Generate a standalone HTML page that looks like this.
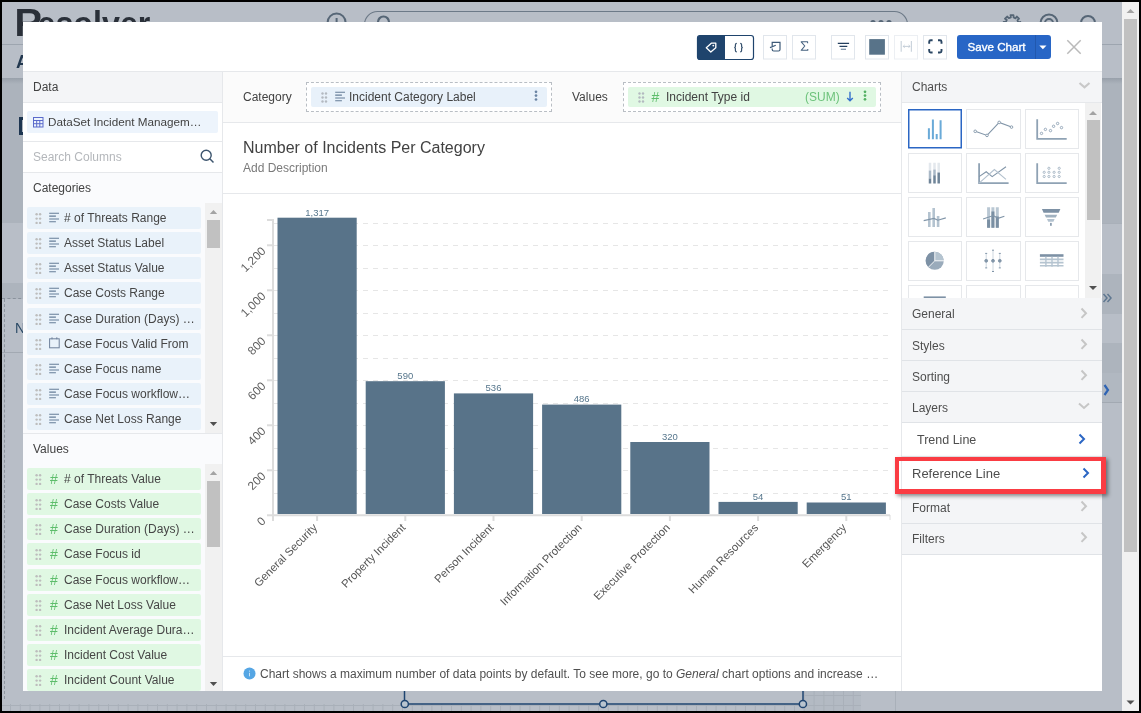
<!DOCTYPE html>
<html><head><meta charset="utf-8">
<style>
*{box-sizing:border-box}
html,body{margin:0;padding:0}
body{width:1141px;height:713px;overflow:hidden;background:#000;position:relative;font-family:"Liberation Sans",sans-serif;color:#3b3f45}
.a{position:absolute}
.t{position:absolute;white-space:nowrap;font-size:12px;line-height:14px}
#bg{left:2px;top:2px;width:1137px;height:709px;background:#b8bec7;overflow:hidden}
#modal{left:23px;top:22px;width:1079px;height:669px;background:#fff;overflow:hidden}
.hl{position:absolute;height:1px;background:#e6e8eb}
.vl{position:absolute;width:1px;background:#e6e8eb}
.item{position:absolute;left:27px;width:174px;height:22px;border-radius:2px}
.cat{background:#e9f2fa}
.val{background:#e0f8e3}
.item .t{left:37px;top:4px;color:#464646}
.sb{position:absolute;background:#f1f1f1}
.sbt{position:absolute;background:#c1c1c1}
.acc{position:absolute;left:902px;width:200px;background:#f4f5f7;border-bottom:1px solid #e6e8eb}
.acc .t{left:10px;color:#4e4e4e}
.tb{position:absolute;top:35px;width:24px;height:24px;border:1px solid #dfe4ea;border-radius:2px;background:#fff}
</style></head><body><div id="wrap" style="position:absolute;left:0;top:0;width:1141px;height:713px;will-change:transform">
<div id="bg" class="a">
 <div class="a" style="left:0;top:0;width:1137px;height:43px;background:#b8bec7;border-bottom:1px solid #9da5af"></div>
 <svg class="a" style="left:0;top:0" width="200" height="42" font-family="Liberation Sans" font-weight="bold" fill="#2a3039"><text x="12.5" y="33.8" font-size="39">R</text><text transform="translate(35.5,33.8) scale(0.934,1)" x="0" y="0" font-size="34.5">esolver</text></svg>
 <svg class="a" style="left:0;top:0" width="1137" height="42">
  <circle cx="334.6" cy="20.5" r="9" fill="none" stroke="#566676" stroke-width="2"/>
  <line x1="334.6" y1="16" x2="334.6" y2="22" stroke="#566676" stroke-width="2"/>
  <rect x="362.5" y="9.5" width="543" height="26" rx="13" fill="none" stroke="#6d7a88" stroke-width="1.2"/>
  <circle cx="381.5" cy="20" r="5.5" fill="none" stroke="#566676" stroke-width="2.2"/>
  <circle cx="871" cy="20.5" r="2.6" fill="#566676"/><circle cx="879" cy="20.5" r="2.6" fill="#566676"/><circle cx="887" cy="20.5" r="2.6" fill="#566676"/>
  <path d="M1008.51 13.13 L1011.49 13.13 L1011.59 15.40 L1013.60 16.33 L1014.86 14.53 L1016.97 16.64 L1015.44 18.31 L1016.20 20.39 L1018.37 20.01 L1018.37 22.99 L1016.10 23.09 L1015.17 25.10 L1016.97 26.36 L1014.86 28.47 L1013.19 26.94 L1011.11 27.70 L1011.49 29.87 L1008.51 29.87 L1008.41 27.60 L1006.40 26.67 L1005.14 28.47 L1003.03 26.36 L1004.56 24.69 L1003.80 22.61 L1001.63 22.99 L1001.63 20.01 L1003.90 19.91 L1004.83 17.90 L1003.03 16.64 L1005.14 14.53 L1006.81 16.06 L1008.89 15.30 Z" fill="none" stroke="#566676" stroke-width="1.8" stroke-linejoin="round"/>
  <circle cx="1047" cy="21" r="8.5" fill="none" stroke="#566676" stroke-width="2"/>
  <circle cx="1047" cy="21" r="4" fill="none" stroke="#566676" stroke-width="2"/>
  <circle cx="1086" cy="21" r="7" fill="none" stroke="#566676" stroke-width="2"/>
 </svg>
 <div class="a" style="left:0;top:76px;width:1137px;height:145px;background:#acb3bc"></div>
 <div class="a" style="left:0;top:76px;width:1137px;height:6px;background:linear-gradient(#98a0aa,#acb3bc)"></div>
 <div class="t" style="left:14px;top:50px;font-size:18px;line-height:20px;color:#22384f;font-weight:bold">A</div>
 <div class="a" style="left:16.5px;top:114.5px;width:8px;height:18px;border:3px solid #1d3550;border-right:none"></div>
 <div class="a" style="left:0;top:281px;width:30px;height:16px;background:#adb4bd;border-bottom:1px dashed #8a929c"></div>
 <div class="a" style="left:0;top:350px;width:30px;height:1px;background:#a2a9b2"></div>
 <div class="t" style="left:13px;top:318px;font-size:14px;line-height:16px;color:#2b4a66">N</div>
 <div class="a" style="left:2px;top:297px;width:1px;height:400px;border-left:1px dashed #8e969f"></div>
 <div class="a" style="left:1090px;top:221px;width:30px;height:1px;background:#a9b0b9"></div>
 <div class="a" style="left:1090px;top:272px;width:30px;height:40px;background:#adb4bd"></div>
 <div class="a" style="left:1090px;top:341px;width:30px;height:30px;background:#adb4bd"></div>
 <div class="a" style="left:1090px;top:371px;width:30px;height:30px;background:#b1b8c1;border-bottom:1px solid #a2a9b2"></div>
 <svg class="a" style="left:1100px;top:280px" width="20" height="120">
  <path d="M1.5 12 L5 16 L1.5 20 M5.5 12 L9 16 L5.5 20" fill="none" stroke="#5f7790" stroke-width="1.5"/>
  <path d="M2.5 103 L6 108 L2.5 113" fill="none" stroke="#2f64b4" stroke-width="2.2"/>
 </svg>
 <svg class="a" style="left:0;top:689px" width="1137" height="22">
  <rect x="801" y="0" width="58" height="22" fill="#b3bac3"/>
  <g stroke="#a9b0b9" stroke-width="1"><line x1="792.5" y1="13" x2="792.5" y2="20"/><line x1="782.7" y1="13" x2="782.7" y2="20"/><line x1="772.9" y1="13" x2="772.9" y2="20"/><line x1="763.1" y1="13" x2="763.1" y2="20"/><line x1="753.3" y1="13" x2="753.3" y2="20"/><line x1="743.5" y1="13" x2="743.5" y2="20"/><line x1="733.7" y1="13" x2="733.7" y2="20"/><line x1="723.9" y1="13" x2="723.9" y2="20"/><line x1="714.1" y1="13" x2="714.1" y2="20"/><line x1="704.3" y1="13" x2="704.3" y2="20"/><line x1="694.5" y1="13" x2="694.5" y2="20"/><line x1="684.7" y1="13" x2="684.7" y2="20"/><line x1="674.9" y1="13" x2="674.9" y2="20"/><line x1="665.1" y1="13" x2="665.1" y2="20"/><line x1="655.3" y1="13" x2="655.3" y2="20"/><line x1="645.5" y1="13" x2="645.5" y2="20"/><line x1="635.7" y1="13" x2="635.7" y2="20"/><line x1="625.9" y1="13" x2="625.9" y2="20"/><line x1="616.1" y1="13" x2="616.1" y2="20"/><line x1="606.3" y1="13" x2="606.3" y2="20"/><line x1="596.5" y1="13" x2="596.5" y2="20"/><line x1="586.7" y1="13" x2="586.7" y2="20"/><line x1="576.9" y1="13" x2="576.9" y2="20"/><line x1="567.1" y1="13" x2="567.1" y2="20"/><line x1="557.3" y1="13" x2="557.3" y2="20"/><line x1="547.5" y1="13" x2="547.5" y2="20"/><line x1="537.7" y1="13" x2="537.7" y2="20"/><line x1="527.9" y1="13" x2="527.9" y2="20"/><line x1="518.1" y1="13" x2="518.1" y2="20"/><line x1="508.3" y1="13" x2="508.3" y2="20"/><line x1="498.5" y1="13" x2="498.5" y2="20"/><line x1="488.7" y1="13" x2="488.7" y2="20"/><line x1="478.9" y1="13" x2="478.9" y2="20"/><line x1="469.1" y1="13" x2="469.1" y2="20"/><line x1="459.3" y1="13" x2="459.3" y2="20"/><line x1="449.5" y1="13" x2="449.5" y2="20"/><line x1="439.7" y1="13" x2="439.7" y2="20"/><line x1="429.9" y1="13" x2="429.9" y2="20"/><line x1="420.1" y1="13" x2="420.1" y2="20"/><line x1="410.3" y1="13" x2="410.3" y2="20"/><line x1="400.5" y1="13" x2="400.5" y2="20"/><line x1="390.7" y1="13" x2="390.7" y2="20"/><line x1="380.9" y1="13" x2="380.9" y2="20"/><line x1="371.1" y1="13" x2="371.1" y2="20"/><line x1="361.3" y1="13" x2="361.3" y2="20"/><line x1="351.5" y1="13" x2="351.5" y2="20"/><line x1="341.7" y1="13" x2="341.7" y2="20"/><line x1="331.9" y1="13" x2="331.9" y2="20"/><line x1="322.1" y1="13" x2="322.1" y2="20"/><line x1="312.3" y1="13" x2="312.3" y2="20"/><line x1="302.5" y1="13" x2="302.5" y2="20"/><line x1="292.7" y1="13" x2="292.7" y2="20"/><line x1="282.9" y1="13" x2="282.9" y2="20"/><line x1="273.1" y1="13" x2="273.1" y2="20"/><line x1="263.3" y1="13" x2="263.3" y2="20"/><line x1="253.5" y1="13" x2="253.5" y2="20"/><line x1="243.7" y1="13" x2="243.7" y2="20"/><line x1="233.9" y1="13" x2="233.9" y2="20"/><line x1="224.1" y1="13" x2="224.1" y2="20"/><line x1="214.3" y1="13" x2="214.3" y2="20"/><line x1="204.5" y1="13" x2="204.5" y2="20"/><line x1="194.7" y1="13" x2="194.7" y2="20"/><line x1="184.9" y1="13" x2="184.9" y2="20"/><line x1="175.1" y1="13" x2="175.1" y2="20"/><line x1="165.3" y1="13" x2="165.3" y2="20"/><line x1="155.5" y1="13" x2="155.5" y2="20"/><line x1="145.7" y1="13" x2="145.7" y2="20"/><line x1="135.9" y1="13" x2="135.9" y2="20"/><line x1="126.1" y1="13" x2="126.1" y2="20"/><line x1="116.3" y1="13" x2="116.3" y2="20"/><line x1="106.5" y1="13" x2="106.5" y2="20"/><line x1="96.7" y1="13" x2="96.7" y2="20"/><line x1="86.9" y1="13" x2="86.9" y2="20"/><line x1="77.1" y1="13" x2="77.1" y2="20"/><line x1="67.3" y1="13" x2="67.3" y2="20"/><line x1="57.5" y1="13" x2="57.5" y2="20"/><line x1="47.7" y1="13" x2="47.7" y2="20"/><line x1="37.9" y1="13" x2="37.9" y2="20"/><line x1="28.1" y1="13" x2="28.1" y2="20"/><line x1="18.3" y1="13" x2="18.3" y2="20"/><line x1="8.5" y1="13" x2="8.5" y2="20"/><line x1="-1.3" y1="13" x2="-1.3" y2="20"/><line x1="802.3" y1="0" x2="802.3" y2="20"/><line x1="812.1" y1="0" x2="812.1" y2="20"/><line x1="821.9" y1="0" x2="821.9" y2="20"/><line x1="831.7" y1="0" x2="831.7" y2="20"/><line x1="841.5" y1="0" x2="841.5" y2="20"/><line x1="851.3" y1="0" x2="851.3" y2="20"/><line x1="0" y1="14.5" x2="859" y2="14.5"/><line x1="801" y1="4.5" x2="859" y2="4.5"/><line x1="893.5" y1="0" x2="893.5" y2="22"/></g>
  <line x1="402.5" y1="0" x2="402.5" y2="13" stroke="#1f4470" stroke-width="1.5"/>
  <line x1="801" y1="0" x2="801" y2="13" stroke="#1f4470" stroke-width="1.5"/>
  <line x1="402.5" y1="13" x2="800.5" y2="13" stroke="#1f4470" stroke-width="1.5"/>
  <circle cx="402.8" cy="13" r="3.6" fill="#b9c4cf" stroke="#1f4470" stroke-width="1.5"/>
  <circle cx="601.3" cy="13" r="3.6" fill="#b9c4cf" stroke="#1f4470" stroke-width="1.5"/>
  <circle cx="800.9" cy="13" r="3.6" fill="#b9c4cf" stroke="#1f4470" stroke-width="1.5"/>
 </svg>
</div>
<div class="a" style="left:1122px;top:2px;width:17px;height:709px;background:#f1f1f1">
 <svg class="a" style="left:0;top:0" width="17" height="709"><path d="M4.5 11 L8.5 7 L12.5 11 Z" fill="#a3a3a3"/><path d="M4.5 698.5 L8.5 702.5 L12.5 698.5 Z" fill="#505050"/></svg>
 <div class="a" style="left:2px;top:17px;width:13px;height:533px;background:#c1c1c1"></div>
</div>
<div id="modal" class="a"></div>
<!-- toolbar -->
<svg class="a" style="left:690px;top:30px" width="270" height="35">
 <g transform="translate(-690,-30)">
 <rect x="697.5" y="35.5" width="56" height="24" rx="2.5" fill="#fff" stroke="#1f446d" stroke-width="1.2"/>
 <path d="M700 35.5 H725 V59.5 H700 A2.5 2.5 0 0 1 697.5 57 V38 A2.5 2.5 0 0 1 700 35.5 Z" fill="#1f446d"/>
 <path d="M706.3 47.7 L711.3 43.2 L715.8 43.2 L715.8 47.7 L710.8 52 Z" fill="none" stroke="#fff" stroke-width="1.3" stroke-linejoin="round"/>
 <circle cx="713.3" cy="45.6" r="0.9" fill="#fff"/>
 <path d="M736.8 43.4 Q735.4 43.4 735.4 44.7 V46.6 Q735.4 47.5 734.2 47.5 Q735.4 47.5 735.4 48.4 V50.5 Q735.4 51.8 736.8 51.8" fill="none" stroke="#35506d" stroke-width="1.2"/>
 <path d="M740.2 43.4 Q741.6 43.4 741.6 44.7 V46.6 Q741.6 47.5 742.8 47.5 Q741.6 47.5 741.6 48.4 V50.5 Q741.6 51.8 740.2 51.8" fill="none" stroke="#35506d" stroke-width="1.2"/>
 <g fill="#fff" stroke="#e1e6ec" stroke-width="1">
  <rect x="763.5" y="35.5" width="23" height="23.5"/>
  <rect x="792.5" y="35.5" width="23" height="23.5"/>
  <rect x="831.5" y="35.5" width="23" height="23.5"/>
  <rect x="865.5" y="35.5" width="23" height="23.5"/>
  <rect x="894.5" y="35.5" width="23" height="23.5" stroke="#eceff3"/>
  <rect x="923.5" y="35.5" width="23" height="23.5"/>
 </g>
 <path d="M772.2 46 V42.4 H780 V49.5 Q780 51 778.5 51 H773.7 Q772.2 51 772.2 49.5 V48.5" fill="none" stroke="#3d5a78" stroke-width="1.2"/>
 <path d="M770 47.6 L775.8 45.3" fill="none" stroke="#3d5a78" stroke-width="1.2"/>
 <path d="M807.6 43.2 V41.8 H801.2 L804.8 46 L801.2 50.3 H807.8 V49" fill="none" stroke="#45617f" stroke-width="1.05" stroke-linejoin="round"/>
 <path d="M837.8 43.4 H849.1 M839.5 46.4 H847.3" stroke="#243f5e" stroke-width="1.3"/>
 <path d="M840.8 49.3 H846" stroke="#7f93a8" stroke-width="1.3"/>
 <rect x="869.2" y="39.1" width="15.7" height="15.6" fill="#587389"/>
 <path d="M901.2 41 V51.7 M911.4 41 V51.7" stroke="#cbd4dd" stroke-width="1.2"/>
 <path d="M903.2 46.4 H910 M904.6 45 L903.2 46.4 L904.6 47.8 M908.6 45 L910 46.4 L908.6 47.8" fill="none" stroke="#bcc7d2" stroke-width="0.9"/>
 <path d="M929.2 43.8 V41.8 Q929.2 40.3 930.7 40.3 H932.6 M938 40.3 H940 Q941.5 40.3 941.5 41.8 V43.8 M941.5 49 V51 Q941.5 52.5 940 52.5 H938 M932.6 52.5 H930.7 Q929.2 52.5 929.2 51 V49" fill="none" stroke="#2a4663" stroke-width="1.9"/>
 </g>
</svg>
<div class="a" style="left:957px;top:35px;width:94px;height:24px;background:#2866c6;border-radius:3px">
 <div class="t" style="left:10.5px;top:5px;color:#fff;font-size:11.6px;-webkit-text-stroke:0.35px #fff">Save Chart</div>
 <div class="a" style="left:78px;top:0;width:1px;height:24px;background:#2158ae"></div>
 <svg class="a" style="left:79px;top:0" width="15" height="24"><path d="M3.3 10.5 H10.5 L6.9 14.2 Z" fill="#fff"/></svg>
</div>
<svg class="a" style="left:1066px;top:39px" width="16" height="16"><path d="M1.3 1.3 L14.7 14.7 M14.7 1.3 L1.3 14.7" stroke="#bababa" stroke-width="1.5"/></svg>
<div class="hl" style="left:23px;top:71px;width:1079px"></div>

<!-- left panel -->
<div class="a" style="left:23px;top:72px;width:199px;height:31px;background:#f4f5f7;border-bottom:1px solid #e6e8eb"></div>
<div class="t" style="left:33px;top:80px;color:#424242">Data</div>
<div class="a" style="left:27px;top:111px;width:191px;height:22px;background:#edf4fc;border-radius:2px"></div>
<svg class="a" style="left:33px;top:116.5px" width="11" height="11"><g fill="none" stroke="#5b6acb" stroke-width="1"><rect x="0.5" y="0.5" width="9.5" height="9.5"/><path d="M0.5 3.5 H10 M0.5 6.7 H10 M3.7 3.5 V10 M6.8 3.5 V10"/></g></svg>
<div class="t" style="left:48px;top:115px;color:#424242;font-size:11.7px">DataSet Incident Managem…</div>
<div class="hl" style="left:23px;top:141px;width:199px"></div>
<div class="t" style="left:33px;top:150px;color:#b4b7bb">Search Columns</div>
<svg class="a" style="left:200px;top:149px" width="15" height="15"><circle cx="6.2" cy="6.2" r="5" fill="none" stroke="#3d556e" stroke-width="1.4"/><path d="M9.8 9.8 L13.5 13.5" stroke="#3d556e" stroke-width="1.5"/></svg>
<div class="hl" style="left:23px;top:172px;width:199px"></div>
<div class="a" style="left:23px;top:173px;width:199px;height:260px;background:#fafbfd"></div>
<div class="t" style="left:33px;top:181px;color:#424242">Categories</div>
<div class="item cat" style="top:207px"><svg class="a" style="left:8px;top:5.5px" width="7" height="11"><g fill="#bdbdbd"><circle cx="1.6" cy="1.3" r="1.2"/><circle cx="5.1" cy="1.3" r="1.2"/><circle cx="1.6" cy="5.6" r="1.2"/><circle cx="5.1" cy="5.6" r="1.2"/><circle cx="1.6" cy="9.9" r="1.2"/><circle cx="5.1" cy="9.9" r="1.2"/></g></svg><svg class="a" style="left:22px;top:5px" width="12" height="11"><path d="M0.2 1.3 H10 M0.2 4.1 H6.9 M0.2 7 H10 M0.2 9.8 H6.9" stroke="#657d98" stroke-width="1.05"/></svg><div class="t"># of Threats Range</div></div>
<div class="item cat" style="top:232px"><svg class="a" style="left:8px;top:5.5px" width="7" height="11"><g fill="#bdbdbd"><circle cx="1.6" cy="1.3" r="1.2"/><circle cx="5.1" cy="1.3" r="1.2"/><circle cx="1.6" cy="5.6" r="1.2"/><circle cx="5.1" cy="5.6" r="1.2"/><circle cx="1.6" cy="9.9" r="1.2"/><circle cx="5.1" cy="9.9" r="1.2"/></g></svg><svg class="a" style="left:22px;top:5px" width="12" height="11"><path d="M0.2 1.3 H10 M0.2 4.1 H6.9 M0.2 7 H10 M0.2 9.8 H6.9" stroke="#657d98" stroke-width="1.05"/></svg><div class="t">Asset Status Label</div></div>
<div class="item cat" style="top:257px"><svg class="a" style="left:8px;top:5.5px" width="7" height="11"><g fill="#bdbdbd"><circle cx="1.6" cy="1.3" r="1.2"/><circle cx="5.1" cy="1.3" r="1.2"/><circle cx="1.6" cy="5.6" r="1.2"/><circle cx="5.1" cy="5.6" r="1.2"/><circle cx="1.6" cy="9.9" r="1.2"/><circle cx="5.1" cy="9.9" r="1.2"/></g></svg><svg class="a" style="left:22px;top:5px" width="12" height="11"><path d="M0.2 1.3 H10 M0.2 4.1 H6.9 M0.2 7 H10 M0.2 9.8 H6.9" stroke="#657d98" stroke-width="1.05"/></svg><div class="t">Asset Status Value</div></div>
<div class="item cat" style="top:282px"><svg class="a" style="left:8px;top:5.5px" width="7" height="11"><g fill="#bdbdbd"><circle cx="1.6" cy="1.3" r="1.2"/><circle cx="5.1" cy="1.3" r="1.2"/><circle cx="1.6" cy="5.6" r="1.2"/><circle cx="5.1" cy="5.6" r="1.2"/><circle cx="1.6" cy="9.9" r="1.2"/><circle cx="5.1" cy="9.9" r="1.2"/></g></svg><svg class="a" style="left:22px;top:5px" width="12" height="11"><path d="M0.2 1.3 H10 M0.2 4.1 H6.9 M0.2 7 H10 M0.2 9.8 H6.9" stroke="#657d98" stroke-width="1.05"/></svg><div class="t">Case Costs Range</div></div>
<div class="item cat" style="top:308px"><svg class="a" style="left:8px;top:5.5px" width="7" height="11"><g fill="#bdbdbd"><circle cx="1.6" cy="1.3" r="1.2"/><circle cx="5.1" cy="1.3" r="1.2"/><circle cx="1.6" cy="5.6" r="1.2"/><circle cx="5.1" cy="5.6" r="1.2"/><circle cx="1.6" cy="9.9" r="1.2"/><circle cx="5.1" cy="9.9" r="1.2"/></g></svg><svg class="a" style="left:22px;top:5px" width="12" height="11"><path d="M0.2 1.3 H10 M0.2 4.1 H6.9 M0.2 7 H10 M0.2 9.8 H6.9" stroke="#657d98" stroke-width="1.05"/></svg><div class="t">Case Duration (Days) …</div></div>
<div class="item cat" style="top:333px"><svg class="a" style="left:8px;top:5.5px" width="7" height="11"><g fill="#bdbdbd"><circle cx="1.6" cy="1.3" r="1.2"/><circle cx="5.1" cy="1.3" r="1.2"/><circle cx="1.6" cy="5.6" r="1.2"/><circle cx="5.1" cy="5.6" r="1.2"/><circle cx="1.6" cy="9.9" r="1.2"/><circle cx="5.1" cy="9.9" r="1.2"/></g></svg><svg class="a" style="left:22px;top:4px" width="12" height="12"><rect x="0.6" y="1.8" width="9.6" height="9" fill="none" stroke="#6e819b" stroke-width="1"/><path d="M3 0.3 V2.3 M7.8 0.3 V2.3" stroke="#6e819b" stroke-width="1"/></svg><div class="t">Case Focus Valid From</div></div>
<div class="item cat" style="top:358px"><svg class="a" style="left:8px;top:5.5px" width="7" height="11"><g fill="#bdbdbd"><circle cx="1.6" cy="1.3" r="1.2"/><circle cx="5.1" cy="1.3" r="1.2"/><circle cx="1.6" cy="5.6" r="1.2"/><circle cx="5.1" cy="5.6" r="1.2"/><circle cx="1.6" cy="9.9" r="1.2"/><circle cx="5.1" cy="9.9" r="1.2"/></g></svg><svg class="a" style="left:22px;top:5px" width="12" height="11"><path d="M0.2 1.3 H10 M0.2 4.1 H6.9 M0.2 7 H10 M0.2 9.8 H6.9" stroke="#657d98" stroke-width="1.05"/></svg><div class="t">Case Focus name</div></div>
<div class="item cat" style="top:383px"><svg class="a" style="left:8px;top:5.5px" width="7" height="11"><g fill="#bdbdbd"><circle cx="1.6" cy="1.3" r="1.2"/><circle cx="5.1" cy="1.3" r="1.2"/><circle cx="1.6" cy="5.6" r="1.2"/><circle cx="5.1" cy="5.6" r="1.2"/><circle cx="1.6" cy="9.9" r="1.2"/><circle cx="5.1" cy="9.9" r="1.2"/></g></svg><svg class="a" style="left:22px;top:5px" width="12" height="11"><path d="M0.2 1.3 H10 M0.2 4.1 H6.9 M0.2 7 H10 M0.2 9.8 H6.9" stroke="#657d98" stroke-width="1.05"/></svg><div class="t">Case Focus workflow…</div></div>
<div class="item cat" style="top:408px"><svg class="a" style="left:8px;top:5.5px" width="7" height="11"><g fill="#bdbdbd"><circle cx="1.6" cy="1.3" r="1.2"/><circle cx="5.1" cy="1.3" r="1.2"/><circle cx="1.6" cy="5.6" r="1.2"/><circle cx="5.1" cy="5.6" r="1.2"/><circle cx="1.6" cy="9.9" r="1.2"/><circle cx="5.1" cy="9.9" r="1.2"/></g></svg><svg class="a" style="left:22px;top:5px" width="12" height="11"><path d="M0.2 1.3 H10 M0.2 4.1 H6.9 M0.2 7 H10 M0.2 9.8 H6.9" stroke="#657d98" stroke-width="1.05"/></svg><div class="t">Case Net Loss Range</div></div>
<div class="sb" style="left:205px;top:203px;width:17px;height:230px"></div>
<svg class="a" style="left:205px;top:203px" width="17" height="230"><path d="M4.8 11 L8.5 7 L12.2 11 Z" fill="#a3a3a3"/><path d="M4.8 219 L8.5 223 L12.2 219 Z" fill="#505050"/></svg>
<div class="sbt" style="left:207px;top:220px;width:13px;height:28px"></div>
<div class="hl" style="left:23px;top:433px;width:199px"></div>
<div class="a" style="left:23px;top:434px;width:199px;height:257px;background:#fafbfd"></div>
<div class="t" style="left:33px;top:442px;color:#424242">Values</div>
<div class="item val" style="top:468px"><svg class="a" style="left:8px;top:5.5px" width="7" height="11"><g fill="#bdbdbd"><circle cx="1.6" cy="1.3" r="1.2"/><circle cx="5.1" cy="1.3" r="1.2"/><circle cx="1.6" cy="5.6" r="1.2"/><circle cx="5.1" cy="5.6" r="1.2"/><circle cx="1.6" cy="9.9" r="1.2"/><circle cx="5.1" cy="9.9" r="1.2"/></g></svg><div class="t" style="left:23px;top:2.5px;font-size:14px;line-height:16px;color:#5dbd6b">#</div><div class="t"># of Threats Value</div></div>
<div class="item val" style="top:493px"><svg class="a" style="left:8px;top:5.5px" width="7" height="11"><g fill="#bdbdbd"><circle cx="1.6" cy="1.3" r="1.2"/><circle cx="5.1" cy="1.3" r="1.2"/><circle cx="1.6" cy="5.6" r="1.2"/><circle cx="5.1" cy="5.6" r="1.2"/><circle cx="1.6" cy="9.9" r="1.2"/><circle cx="5.1" cy="9.9" r="1.2"/></g></svg><div class="t" style="left:23px;top:2.5px;font-size:14px;line-height:16px;color:#5dbd6b">#</div><div class="t">Case Costs Value</div></div>
<div class="item val" style="top:518px"><svg class="a" style="left:8px;top:5.5px" width="7" height="11"><g fill="#bdbdbd"><circle cx="1.6" cy="1.3" r="1.2"/><circle cx="5.1" cy="1.3" r="1.2"/><circle cx="1.6" cy="5.6" r="1.2"/><circle cx="5.1" cy="5.6" r="1.2"/><circle cx="1.6" cy="9.9" r="1.2"/><circle cx="5.1" cy="9.9" r="1.2"/></g></svg><div class="t" style="left:23px;top:2.5px;font-size:14px;line-height:16px;color:#5dbd6b">#</div><div class="t">Case Duration (Days) …</div></div>
<div class="item val" style="top:543px"><svg class="a" style="left:8px;top:5.5px" width="7" height="11"><g fill="#bdbdbd"><circle cx="1.6" cy="1.3" r="1.2"/><circle cx="5.1" cy="1.3" r="1.2"/><circle cx="1.6" cy="5.6" r="1.2"/><circle cx="5.1" cy="5.6" r="1.2"/><circle cx="1.6" cy="9.9" r="1.2"/><circle cx="5.1" cy="9.9" r="1.2"/></g></svg><div class="t" style="left:23px;top:2.5px;font-size:14px;line-height:16px;color:#5dbd6b">#</div><div class="t">Case Focus id</div></div>
<div class="item val" style="top:569px"><svg class="a" style="left:8px;top:5.5px" width="7" height="11"><g fill="#bdbdbd"><circle cx="1.6" cy="1.3" r="1.2"/><circle cx="5.1" cy="1.3" r="1.2"/><circle cx="1.6" cy="5.6" r="1.2"/><circle cx="5.1" cy="5.6" r="1.2"/><circle cx="1.6" cy="9.9" r="1.2"/><circle cx="5.1" cy="9.9" r="1.2"/></g></svg><div class="t" style="left:23px;top:2.5px;font-size:14px;line-height:16px;color:#5dbd6b">#</div><div class="t">Case Focus workflow…</div></div>
<div class="item val" style="top:594px"><svg class="a" style="left:8px;top:5.5px" width="7" height="11"><g fill="#bdbdbd"><circle cx="1.6" cy="1.3" r="1.2"/><circle cx="5.1" cy="1.3" r="1.2"/><circle cx="1.6" cy="5.6" r="1.2"/><circle cx="5.1" cy="5.6" r="1.2"/><circle cx="1.6" cy="9.9" r="1.2"/><circle cx="5.1" cy="9.9" r="1.2"/></g></svg><div class="t" style="left:23px;top:2.5px;font-size:14px;line-height:16px;color:#5dbd6b">#</div><div class="t">Case Net Loss Value</div></div>
<div class="item val" style="top:619px"><svg class="a" style="left:8px;top:5.5px" width="7" height="11"><g fill="#bdbdbd"><circle cx="1.6" cy="1.3" r="1.2"/><circle cx="5.1" cy="1.3" r="1.2"/><circle cx="1.6" cy="5.6" r="1.2"/><circle cx="5.1" cy="5.6" r="1.2"/><circle cx="1.6" cy="9.9" r="1.2"/><circle cx="5.1" cy="9.9" r="1.2"/></g></svg><div class="t" style="left:23px;top:2.5px;font-size:14px;line-height:16px;color:#5dbd6b">#</div><div class="t">Incident Average Dura…</div></div>
<div class="item val" style="top:644px"><svg class="a" style="left:8px;top:5.5px" width="7" height="11"><g fill="#bdbdbd"><circle cx="1.6" cy="1.3" r="1.2"/><circle cx="5.1" cy="1.3" r="1.2"/><circle cx="1.6" cy="5.6" r="1.2"/><circle cx="5.1" cy="5.6" r="1.2"/><circle cx="1.6" cy="9.9" r="1.2"/><circle cx="5.1" cy="9.9" r="1.2"/></g></svg><div class="t" style="left:23px;top:2.5px;font-size:14px;line-height:16px;color:#5dbd6b">#</div><div class="t">Incident Cost Value</div></div>
<div class="item val" style="top:669px"><svg class="a" style="left:8px;top:5.5px" width="7" height="11"><g fill="#bdbdbd"><circle cx="1.6" cy="1.3" r="1.2"/><circle cx="5.1" cy="1.3" r="1.2"/><circle cx="1.6" cy="5.6" r="1.2"/><circle cx="5.1" cy="5.6" r="1.2"/><circle cx="1.6" cy="9.9" r="1.2"/><circle cx="5.1" cy="9.9" r="1.2"/></g></svg><div class="t" style="left:23px;top:2.5px;font-size:14px;line-height:16px;color:#5dbd6b">#</div><div class="t">Incident Count Value</div></div>
<div class="sb" style="left:205px;top:464px;width:17px;height:227px"></div>
<svg class="a" style="left:205px;top:464px" width="17" height="227"><path d="M4.8 11 L8.5 7 L12.2 11 Z" fill="#a3a3a3"/><path d="M4.8 218 L8.5 222 L12.2 218 Z" fill="#505050"/></svg>
<div class="sbt" style="left:207px;top:481px;width:13px;height:66px"></div>
<div class="vl" style="left:222px;top:72px;height:619px"></div>
<!-- center -->
<div class="a" style="left:223px;top:72px;width:678px;height:51px;background:#fbfbfb;border-bottom:1px solid #e6e8eb"></div>
<div class="t" style="left:243px;top:90px;color:#424242">Category</div>
<div class="a" style="left:306px;top:82px;width:246px;height:30px;border:1px dashed #b9bec4;background:#fff"></div>
<div class="a" style="left:311px;top:87px;width:236px;height:20px;background:#e8f1fa;border-radius:2px">
 <svg class="a" style="left:10px;top:5px" width="7" height="11"><g fill="#b3b9c0"><circle cx="1.5" cy="1.5" r="1.2"/><circle cx="5" cy="1.5" r="1.2"/><circle cx="1.5" cy="5.5" r="1.2"/><circle cx="5" cy="5.5" r="1.2"/><circle cx="1.5" cy="9.5" r="1.2"/><circle cx="5" cy="9.5" r="1.2"/></g></svg>
 <svg class="a" style="left:23.5px;top:4px" width="12" height="11"><path d="M0.2 1.3 H10 M0.2 4.1 H6.9 M0.2 7 H10 M0.2 9.8 H6.9" stroke="#657d98" stroke-width="1.05"/></svg>
 <div class="t" style="left:38px;top:3px;color:#424242">Incident Category Label</div>
 <svg class="a" style="left:222px;top:2px" width="6" height="16"><g fill="#6a84a3"><circle cx="3" cy="2.8" r="1.35"/><circle cx="3" cy="6.6" r="1.35"/><circle cx="3" cy="10.5" r="1.35"/></g></svg>
</div>
<div class="t" style="left:572px;top:90px;color:#424242">Values</div>
<div class="a" style="left:623px;top:82px;width:258px;height:30px;border:1px dashed #b9bec4;background:#fff"></div>
<div class="a" style="left:628px;top:87px;width:248px;height:20px;background:#e0f8e3;border-radius:2px">
 <svg class="a" style="left:10px;top:5px" width="7" height="11"><g fill="#b3b9c0"><circle cx="1.5" cy="1.5" r="1.2"/><circle cx="5" cy="1.5" r="1.2"/><circle cx="1.5" cy="5.5" r="1.2"/><circle cx="5" cy="5.5" r="1.2"/><circle cx="1.5" cy="9.5" r="1.2"/><circle cx="5" cy="9.5" r="1.2"/></g></svg>
 <div class="t" style="left:23.5px;top:1.5px;font-size:14px;line-height:16px;color:#5dbd6b">#</div>
 <div class="t" style="left:38px;top:3px;color:#424242">Incident Type id</div>
 <div class="t" style="left:177px;top:3px;color:#6cc27a">(SUM)</div>
 <svg class="a" style="left:217px;top:3px" width="10" height="14"><path d="M5 1.8 V10.5 M2.2 8 L5 10.8 L7.8 8" fill="none" stroke="#3571cc" stroke-width="1.4"/></svg>
 <svg class="a" style="left:234px;top:2px" width="6" height="16"><g fill="#52b062"><circle cx="3" cy="2.8" r="1.35"/><circle cx="3" cy="6.6" r="1.35"/><circle cx="3" cy="10.3" r="1.35"/></g></svg>
</div>
<div class="t" style="left:243px;top:139px;font-size:16px;line-height:18px;color:#424242">Number of Incidents Per Category</div>
<div class="t" style="left:243px;top:161px;color:#7a7a7a">Add Description</div>
<div class="hl" style="left:223px;top:193px;width:678px"></div>
<svg class="a" style="left:0;top:0" width="1141" height="713" font-family="Liberation Sans">
<line x1="273" y1="493.5" x2="889" y2="493.5" stroke="#e6e6e6" stroke-width="1" stroke-dasharray="5 5"/>
<line x1="273" y1="470.5" x2="889" y2="470.5" stroke="#e6e6e6" stroke-width="1" stroke-dasharray="5 5"/>
<line x1="273" y1="448.5" x2="889" y2="448.5" stroke="#e6e6e6" stroke-width="1" stroke-dasharray="5 5"/>
<line x1="273" y1="425.5" x2="889" y2="425.5" stroke="#e6e6e6" stroke-width="1" stroke-dasharray="5 5"/>
<line x1="273" y1="403.5" x2="889" y2="403.5" stroke="#e6e6e6" stroke-width="1" stroke-dasharray="5 5"/>
<line x1="273" y1="380.5" x2="889" y2="380.5" stroke="#e6e6e6" stroke-width="1" stroke-dasharray="5 5"/>
<line x1="273" y1="358.5" x2="889" y2="358.5" stroke="#e6e6e6" stroke-width="1" stroke-dasharray="5 5"/>
<line x1="273" y1="335.5" x2="889" y2="335.5" stroke="#e6e6e6" stroke-width="1" stroke-dasharray="5 5"/>
<line x1="273" y1="313.5" x2="889" y2="313.5" stroke="#e6e6e6" stroke-width="1" stroke-dasharray="5 5"/>
<line x1="273" y1="290.5" x2="889" y2="290.5" stroke="#e6e6e6" stroke-width="1" stroke-dasharray="5 5"/>
<line x1="273" y1="268.5" x2="889" y2="268.5" stroke="#e6e6e6" stroke-width="1" stroke-dasharray="5 5"/>
<line x1="273" y1="245.5" x2="889" y2="245.5" stroke="#e6e6e6" stroke-width="1" stroke-dasharray="5 5"/>
<line x1="273" y1="223.5" x2="889" y2="223.5" stroke="#e6e6e6" stroke-width="1" stroke-dasharray="5 5"/>
<rect x="277.5" y="217.7" width="79.2" height="296.3" fill="#587389"/>
<text x="317.1" y="215.5" font-size="9.5" fill="#56768c" text-anchor="middle">1,317</text>
<line x1="317.1" y1="516" x2="317.1" y2="521" stroke="#dcdcdc" stroke-width="2"/>
<text transform="translate(317.9,528.3) rotate(-45)" font-size="11.25" fill="#555" text-anchor="end">General Security</text>
<rect x="365.7" y="381.2" width="79.2" height="132.8" fill="#587389"/>
<text x="405.3" y="379.1" font-size="9.5" fill="#56768c" text-anchor="middle">590</text>
<line x1="405.3" y1="516" x2="405.3" y2="521" stroke="#dcdcdc" stroke-width="2"/>
<text transform="translate(406.1,528.3) rotate(-45)" font-size="11.25" fill="#555" text-anchor="end">Property Incident</text>
<rect x="453.9" y="393.4" width="79.2" height="120.6" fill="#587389"/>
<text x="493.5" y="391.2" font-size="9.5" fill="#56768c" text-anchor="middle">536</text>
<line x1="493.5" y1="516" x2="493.5" y2="521" stroke="#dcdcdc" stroke-width="2"/>
<text transform="translate(494.3,528.3) rotate(-45)" font-size="11.25" fill="#555" text-anchor="end">Person Incident</text>
<rect x="542.1" y="404.6" width="79.2" height="109.4" fill="#587389"/>
<text x="581.7" y="402.4" font-size="9.5" fill="#56768c" text-anchor="middle">486</text>
<line x1="581.7" y1="516" x2="581.7" y2="521" stroke="#dcdcdc" stroke-width="2"/>
<text transform="translate(582.5,528.3) rotate(-45)" font-size="11.25" fill="#555" text-anchor="end">Information Protection</text>
<rect x="630.3" y="442.0" width="79.2" height="72.0" fill="#587389"/>
<text x="669.9" y="439.8" font-size="9.5" fill="#56768c" text-anchor="middle">320</text>
<line x1="669.9" y1="516" x2="669.9" y2="521" stroke="#dcdcdc" stroke-width="2"/>
<text transform="translate(670.7,528.3) rotate(-45)" font-size="11.25" fill="#555" text-anchor="end">Executive Protection</text>
<rect x="718.5" y="501.9" width="79.2" height="12.2" fill="#587389"/>
<text x="758.1" y="499.7" font-size="9.5" fill="#56768c" text-anchor="middle">54</text>
<line x1="758.1" y1="516" x2="758.1" y2="521" stroke="#dcdcdc" stroke-width="2"/>
<text transform="translate(758.9,528.3) rotate(-45)" font-size="11.25" fill="#555" text-anchor="end">Human Resources</text>
<rect x="806.7" y="502.5" width="79.2" height="11.5" fill="#587389"/>
<text x="846.3" y="500.3" font-size="9.5" fill="#56768c" text-anchor="middle">51</text>
<line x1="846.3" y1="516" x2="846.3" y2="521" stroke="#dcdcdc" stroke-width="2"/>
<text transform="translate(847.1,528.3) rotate(-45)" font-size="11.25" fill="#555" text-anchor="end">Emergency</text>
<line x1="273" y1="219" x2="273" y2="521" stroke="#dcdcdc" stroke-width="2"/>
<line x1="272" y1="515.2" x2="890" y2="515.2" stroke="#dcdcdc" stroke-width="2"/>
<line x1="890" y1="515" x2="890" y2="520" stroke="#dcdcdc" stroke-width="1"/>
<line x1="267" y1="220" x2="273" y2="220" stroke="#dcdcdc" stroke-width="2"/>
<line x1="267" y1="515.3" x2="273" y2="515.3" stroke="#dcdcdc" stroke-width="2"/>
<text transform="translate(266.5,521.8) rotate(-45)" font-size="11.8" fill="#5e5e5e" text-anchor="end">0</text>
<line x1="267" y1="470.3" x2="273" y2="470.3" stroke="#dcdcdc" stroke-width="2"/>
<text transform="translate(266.5,476.8) rotate(-45)" font-size="11.8" fill="#5e5e5e" text-anchor="end">200</text>
<line x1="267" y1="425.3" x2="273" y2="425.3" stroke="#dcdcdc" stroke-width="2"/>
<text transform="translate(266.5,431.8) rotate(-45)" font-size="11.8" fill="#5e5e5e" text-anchor="end">400</text>
<line x1="267" y1="380.3" x2="273" y2="380.3" stroke="#dcdcdc" stroke-width="2"/>
<text transform="translate(266.5,386.8) rotate(-45)" font-size="11.8" fill="#5e5e5e" text-anchor="end">600</text>
<line x1="267" y1="335.3" x2="273" y2="335.3" stroke="#dcdcdc" stroke-width="2"/>
<text transform="translate(266.5,341.8) rotate(-45)" font-size="11.8" fill="#5e5e5e" text-anchor="end">800</text>
<line x1="267" y1="290.3" x2="273" y2="290.3" stroke="#dcdcdc" stroke-width="2"/>
<text transform="translate(266.5,296.8) rotate(-45)" font-size="11.8" fill="#5e5e5e" text-anchor="end">1,000</text>
<line x1="267" y1="245.3" x2="273" y2="245.3" stroke="#dcdcdc" stroke-width="2"/>
<text transform="translate(266.5,251.8) rotate(-45)" font-size="11.8" fill="#5e5e5e" text-anchor="end">1,200</text>
</svg>
<div class="hl" style="left:223px;top:656px;width:678px"></div>
<svg class="a" style="left:242.5px;top:667px" width="13" height="13"><circle cx="6.5" cy="6.5" r="6" fill="#55a6e4"/><path d="M6.5 5.8 V9.3" stroke="#c8e2f6" stroke-width="1"/><circle cx="6.5" cy="4.1" r="0.6" fill="#c8e2f6"/></svg>
<div class="t" style="left:260px;top:667px;color:#505050">Chart shows a maximum number of data points by default. To see more, go to <i>General</i> chart options and increase …</div>
<div class="vl" style="left:901px;top:72px;height:619px"></div>
<!-- right panel -->
<div class="a" style="left:902px;top:72px;width:200px;height:31px;background:#f4f5f7;border-bottom:1px solid #e6e8eb"></div>
<div class="t" style="left:912px;top:80px;color:#4e4e4e">Charts</div>
<svg class="a" style="left:1078px;top:81px" width="14" height="9"><path d="M1.5 2 L6.5 6.3 L11.5 2" fill="none" stroke="#c8c8c8" stroke-width="2.2"/></svg>
<div class="sb" style="left:1085px;top:103px;width:16px;height:195px"></div>
<svg class="a" style="left:1085px;top:103px" width="16" height="195"><path d="M4 12 L8 8 L12 12 Z" fill="#a3a3a3"/><path d="M4 183 L8 187 L12 183 Z" fill="#505050"/></svg>
<div class="sbt" style="left:1087px;top:120px;width:13px;height:100px"></div>
<svg class="a" style="left:908px;top:109px" width="54" height="40"><rect x="0.75" y="0.75" width="52.5" height="38" fill="#fff" stroke="#2b66c4" stroke-width="1.5"/><g transform="translate(0.0,0.3)"><path d="M20.9 19 V30 M24.9 10.2 V30 M28.7 24.6 V30 M32.6 11 V30" stroke="#6aaad8" stroke-width="2"/></g></svg>
<svg class="a" style="left:966px;top:109px" width="55" height="40"><rect x="0.5" y="0.5" width="54" height="39" fill="#fff" stroke="#e6e8eb" stroke-width="1"/><g transform="translate(0.5,0.3)"><path d="M8.7 22 L20.5 26.1 L32.7 13.1 L45 17.8" fill="none" stroke="#8195a8" stroke-width="1.1"/><g fill="#fff" stroke="#8195a8" stroke-width="0.9"><circle cx="8.7" cy="22" r="1.3"/><circle cx="20.5" cy="26.1" r="1.3"/><circle cx="32.7" cy="13.1" r="1.3"/><circle cx="45" cy="17.8" r="1.3"/></g></g></svg>
<svg class="a" style="left:1025px;top:109px" width="54" height="40"><rect x="0.5" y="0.5" width="53" height="39" fill="#fff" stroke="#e6e8eb" stroke-width="1"/><g transform="translate(0.4,0.3)"><path d="M11.8 9.9 V29.6 H41.3" fill="none" stroke="#8fa2b4" stroke-width="1.8"/><g fill="#fff" stroke="#8fa2b4" stroke-width="0.9"><circle cx="16.1" cy="24.1" r="1.2"/><circle cx="20" cy="20.1" r="1.2"/><circle cx="25.1" cy="21.3" r="1.2"/><circle cx="28.2" cy="17" r="1.2"/><circle cx="32.2" cy="14.2" r="1.2"/><circle cx="36.1" cy="18.3" r="1.2"/></g></g></svg>
<svg class="a" style="left:908px;top:153px" width="54" height="40"><rect x="0.5" y="0.5" width="53" height="39" fill="#fff" stroke="#e6e8eb" stroke-width="1"/><g transform="translate(0.0,0.2)"><g stroke-width="2.5"><path d="M22 9.5 V17.2 M26.5 9.5 V16.4 M30.7 9.5 V19.4" stroke="#e3e8ed"/><path d="M22 17.2 V25.3 M26.5 16.4 V22.1" stroke="#a9b8c6"/><path d="M22 25.3 V30.3 M26.5 22.1 V30.3 M30.7 19.4 V30.3" stroke="#6f8498"/></g></g></svg>
<svg class="a" style="left:966px;top:153px" width="55" height="40"><rect x="0.5" y="0.5" width="54" height="39" fill="#fff" stroke="#e6e8eb" stroke-width="1"/><g transform="translate(0.5,0.2)"><path d="M12.6 10 V30 H42.1" fill="none" stroke="#8fa2b4" stroke-width="1.8"/><path d="M12.6 23.4 L19.7 18.5 L25.7 23.4 L39.5 13.6" fill="none" stroke="#8195a8" stroke-width="1.1"/><path d="M12.6 30 L27.9 16.3 L39.5 26.1" fill="none" stroke="#b3c1ce" stroke-width="1.1"/></g></svg>
<svg class="a" style="left:1025px;top:153px" width="54" height="40"><rect x="0.5" y="0.5" width="53" height="39" fill="#fff" stroke="#e6e8eb" stroke-width="1"/><g transform="translate(0.4,0.2)"><path d="M11.8 10 V30 H41.3" fill="none" stroke="#8fa2b4" stroke-width="1.8"/><g fill="#fff" stroke="#a3b3c2" stroke-width="0.9"><circle cx="18.8" cy="23.3" r="1.1"/><circle cx="18.8" cy="19.1" r="1.1"/><circle cx="23.5" cy="23.3" r="1.1"/><circle cx="23.5" cy="19.1" r="1.1"/><circle cx="23.5" cy="15.1" r="1.1"/><circle cx="28.7" cy="23.3" r="1.1"/><circle cx="28.7" cy="19.1" r="1.1"/><circle cx="33.8" cy="23.3" r="1.1"/><circle cx="33.8" cy="19.1" r="1.1"/><circle cx="33.8" cy="15.1" r="1.1"/></g></g></svg>
<svg class="a" style="left:908px;top:197px" width="54" height="40"><rect x="0.5" y="0.5" width="53" height="39" fill="#fff" stroke="#e6e8eb" stroke-width="1"/><g transform="translate(0.0,0.4)"><path d="M21.3 14.6 V29.5 M25.7 10.5 V29.5 M30.1 18.6 V29.5" stroke="#b4c3d0" stroke-width="2.6"/><path d="M15.7 23.2 L26 21 L29.9 22.8 L37.8 20.5" fill="none" stroke="#8195a8" stroke-width="1.1"/></g></svg>
<svg class="a" style="left:966px;top:197px" width="55" height="40"><rect x="0.5" y="0.5" width="54" height="39" fill="#fff" stroke="#e6e8eb" stroke-width="1"/><g transform="translate(0.5,0.4)"><g stroke-width="3"><path d="M22.1 9.9 V30.4 M26.4 9.9 V30.4 M30.8 9.9 V30.4" stroke="#b9c7d3"/><path d="M22.1 22 V30.4 M26.4 14 V30.4 M30.8 19 V30.4" stroke="#7a8fa3"/></g><path d="M16.6 21.6 L26.8 18.1 L31.6 20.9 L37.9 18.9" fill="none" stroke="#8195a8" stroke-width="1.1"/></g></svg>
<svg class="a" style="left:1025px;top:197px" width="54" height="40"><rect x="0.5" y="0.5" width="53" height="39" fill="#fff" stroke="#e6e8eb" stroke-width="1"/><g transform="translate(0.4,0.4)"><path d="M16.5 11.5 H35 L33.3 15.3 H18.2 Z" fill="#7d91a5"/><path d="M19.2 17.3 H31.8 L30.4 20.2 H20.6 Z" fill="#a0b1c0"/><path d="M21.6 21.6 H29.2 L28 24.4 H22.8 Z" fill="#b3c2cf"/><rect x="24.7" y="25.5" width="1.6" height="2.9" fill="#8195a8"/></g></svg>
<svg class="a" style="left:908px;top:241px" width="54" height="40"><rect x="0.5" y="0.5" width="53" height="39" fill="#fff" stroke="#e6e8eb" stroke-width="1"/><g transform="translate(0.0,0.5)"><circle cx="26.8" cy="19.3" r="9" fill="#9aabbb"/><path d="M26.8 19.3 V10.3 A9 9 0 0 0 20.4 25.7 Z" fill="#7d91a5"/><path d="M26.8 19.3 V10.3 A9 9 0 0 1 35.8 19.3 Z" fill="#b5c4d0"/><path d="M26.8 10 V19.3 H36 M26.8 19.3 L20.2 25.9" fill="none" stroke="#fff" stroke-width="0.9"/></g></svg>
<svg class="a" style="left:966px;top:241px" width="55" height="40"><rect x="0.5" y="0.5" width="54" height="39" fill="#fff" stroke="#e6e8eb" stroke-width="1"/><g transform="translate(0.5,0.5)"><g stroke="#cfd8e0" stroke-width="1"><path d="M19.7 11.9 V26.4 M26.5 8.7 V30 M33.3 11.9 V26.4"/></g><g stroke="#8195a8" stroke-width="1" fill="#8195a8"><path d="M18.7 11.9 H20.7 M18.7 26.4 H20.7 M25.5 8.7 H27.5 M25.5 30 H27.5 M32.3 11.9 H34.3 M32.3 26.4 H34.3"/><circle cx="19.7" cy="19.3" r="1.4"/><circle cx="26.5" cy="19.3" r="1.4"/><circle cx="33.3" cy="19.3" r="1.4"/></g></g></svg>
<svg class="a" style="left:1025px;top:241px" width="54" height="40"><rect x="0.5" y="0.5" width="53" height="39" fill="#fff" stroke="#e6e8eb" stroke-width="1"/><g transform="translate(0.4,0.5)"><rect x="14.5" y="12.7" width="23.6" height="2.6" fill="#7d91a5"/><path d="M14.5 17.9 H38.1 M14.5 21.1 H38.1 M14.5 24.2 H38.1" stroke="#b5c4d0" stroke-width="1.6"/><path d="M20.5 15.3 V25.3 M26.6 15.3 V25.3 M32.6 15.3 V25.3" stroke="#b5c4d0" stroke-width="1.4"/></g></svg>
<svg class="a" style="left:908px;top:285px" width="55" height="13"><rect x="0.5" y="0.5" width="53" height="20" fill="#fff" stroke="#e6e8eb" stroke-width="1"/><path d="M15.7 12.2 H37.8" stroke="#7d91a5" stroke-width="1.6"/></svg>
<svg class="a" style="left:966px;top:285px" width="55" height="13"><rect x="0.5" y="0.5" width="54" height="20" fill="#fff" stroke="#e6e8eb" stroke-width="1"/></svg>
<svg class="a" style="left:1025px;top:285px" width="55" height="13"><rect x="0.5" y="0.5" width="53" height="20" fill="#fff" stroke="#e6e8eb" stroke-width="1"/></svg>
<div class="acc" style="top:298px;height:32px;border-bottom-color:#e0e3e7"><div class="t" style="top:9px">General</div><svg class="a" style="left:177px;top:8.5px" width="10" height="13"><path d="M2.5 1.5 L7 6.2 L2.5 10.9" fill="none" stroke="#c6c6c6" stroke-width="2"/></svg></div>
<div class="acc" style="top:330px;height:31px;border-bottom-color:#e0e3e7"><div class="t" style="top:8.5px">Styles</div><svg class="a" style="left:177px;top:8px" width="10" height="13"><path d="M2.5 1.5 L7 6.2 L2.5 10.9" fill="none" stroke="#c6c6c6" stroke-width="2"/></svg></div>
<div class="acc" style="top:361px;height:31px;border-bottom-color:#e0e3e7"><div class="t" style="top:8.5px">Sorting</div><svg class="a" style="left:177px;top:8px" width="10" height="13"><path d="M2.5 1.5 L7 6.2 L2.5 10.9" fill="none" stroke="#c6c6c6" stroke-width="2"/></svg></div>
<div class="acc" style="top:392px;height:31px;border-bottom-color:#e0e3e7"><div class="t" style="top:8.5px">Layers</div><svg class="a" style="left:175px;top:10px" width="14" height="8"><path d="M2 1.5 L7 6 L12 1.5" fill="none" stroke="#c6c6c6" stroke-width="2"/></svg></div>
<div class="a" style="left:902px;top:423px;width:200px;height:34px;background:#fff;border-bottom:1px solid #e8eaed"><div class="t" style="left:15px;top:9.5px;font-size:12.5px;color:#4e4e4e">Trend Line</div><svg class="a" style="left:176px;top:10px" width="8" height="12"><path d="M1.5 1.5 L6 6 L1.5 10.5" fill="none" stroke="#2b66c4" stroke-width="2"/></svg></div>
<div class="a" style="left:902px;top:457px;width:200px;height:34px;background:#fff"><div class="t" style="left:10px;top:9.5px;font-size:13px;color:#4e4e4e">Reference Line</div><svg class="a" style="left:180px;top:10px" width="8" height="12"><path d="M1.5 1.5 L6 6 L1.5 10.5" fill="none" stroke="#2b66c4" stroke-width="2"/></svg></div>
<div class="acc" style="top:491px;height:33px;border-bottom-color:#e0e3e7"><div class="t" style="top:9.5px">Format</div><svg class="a" style="left:177px;top:9px" width="10" height="13"><path d="M2.5 1.5 L7 6.2 L2.5 10.9" fill="none" stroke="#c6c6c6" stroke-width="2"/></svg></div>
<div class="acc" style="top:524px;height:31px;border-bottom-color:#e0e3e7"><div class="t" style="top:7.5px">Filters</div><svg class="a" style="left:177px;top:7px" width="10" height="13"><path d="M2.5 1.5 L7 6.2 L2.5 10.9" fill="none" stroke="#c6c6c6" stroke-width="2"/></svg></div>
<div class="a" style="left:895px;top:457px;width:211px;height:37px;border-style:solid;border-color:#fa3c43;border-width:4px 5px 5px 4px;box-shadow:2px 2px 4px rgba(0,0,0,0.45)"></div>
</div></body></html>
